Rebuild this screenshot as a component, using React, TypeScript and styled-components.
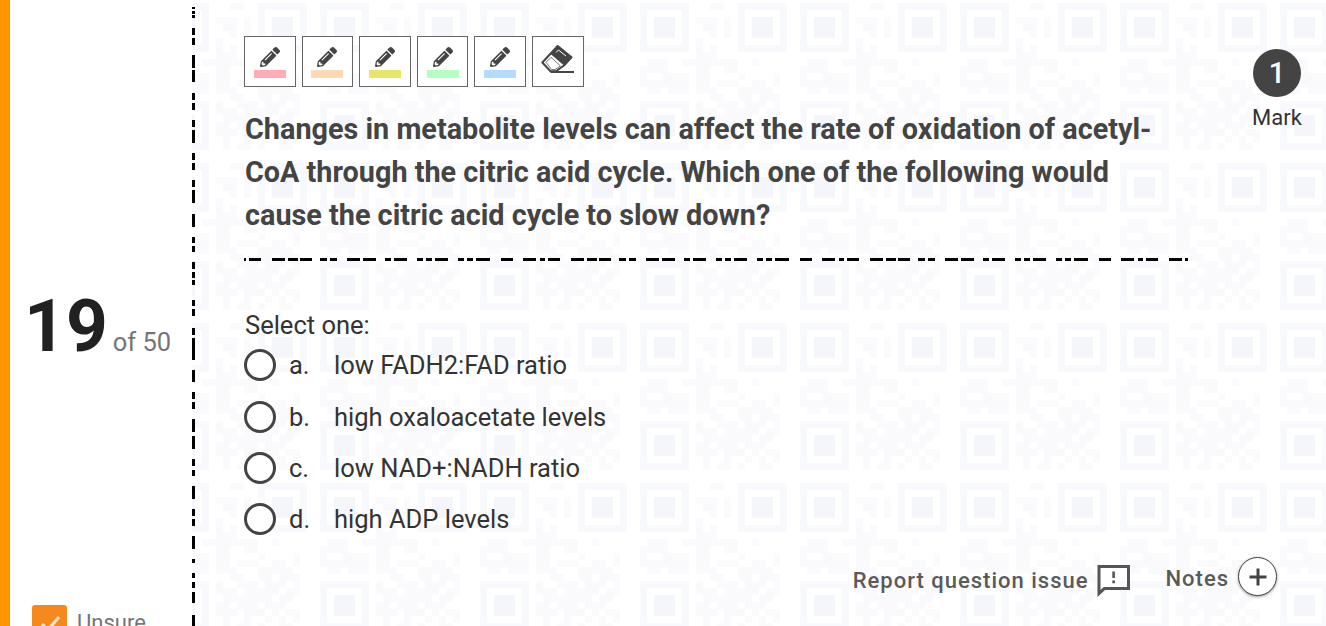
import React from "react";
import styled, { createGlobalStyle } from "styled-components";
import { FaPencilAlt } from "react-icons/fa";

const GlobalStyle = createGlobalStyle`
  html, body { margin: 0; padding: 0; background: #fff; }
  * { box-sizing: border-box; }
`;

const QR_ROWS = [
  "000000000011000000000",
  "000000000000000000000",
  "000000001110100000000",
  "000000000110100000000",
  "000000000010100000000",
  "000000001000000000000",
  "000000001010000000000",
  "000000001110000000000",
  "011100111111110010000",
  "111100001100110000000",
  "100111101100001000010",
  "111111101101110011010",
  "011011101110001111100",
  "000000000011001101110",
  "000000001001110111010",
  "000000001110111110110",
  "000000000111111101100",
  "000000001101110111000",
  "000000001110111010110",
  "000000000100100101010",
  "000000000101101001100",
];

const ring = (x: number, y: number) =>
  `M${x * 7} ${y * 7}h49v49h-49zM${x * 7 + 7} ${y * 7 + 7}v35h35v-35z`;
const core = (x: number, y: number) => `M${x * 7 + 14} ${y * 7 + 14}h21v21h-21z`;

const FINDERS: [number, number][] = [
  [0, 0],
  [14, 0],
  [0, 14],
];

const dataPath = QR_ROWS.map((row, r) =>
  [...row].map((c, col) => (c === "1" ? `M${col * 7} ${r * 7}h7v7h-7z` : "")).join("")
).join("");

const svgUri = (w: number, h: number, body: string) =>
  `url("data:image/svg+xml,${encodeURIComponent(
    `<svg xmlns='http://www.w3.org/2000/svg' width='${w}' height='${h}'>${body}</svg>`
  )}")`;

const qrTile = svgUri(
  160,
  160,
  `<path fill='#fafafd' d='${dataPath}'/>` +
    `<path fill='#f8f9fd' fill-rule='evenodd' d='${FINDERS.map(([x, y]) => ring(x, y)).join("")}'/>` +
    `<path fill='#f5f6fb' d='${FINDERS.map(([x, y]) => core(x, y)).join("")}'/>`
);

const H_SEGMENTS = [
  [245, 247], [250, 262], [273, 286], [289, 299], [301, 313], [321, 328], [331, 338], [348, 361], [364, 377],
  [386, 392], [395, 408], [418, 424], [427, 433], [436, 449], [459, 465], [468, 474], [477, 491], [502, 514],
  [524, 537], [541, 547], [550, 563],
];
const ruleTile = svgUri(
  299,
  3,
  H_SEGMENTS.map(([a, b]) => `<rect x='${a - 245}' width='${b - a}' height='3'/>`).join("")
);

const V_SEGMENTS = [
  [7, 9], [11, 14], [15, 18], [28, 35], [38, 45], [55, 68], [70, 82], [93, 100], [103, 110], [120, 127], [130, 143],
  [153, 160], [163, 170], [180, 187], [190, 203], [214, 227], [237, 243], [246, 252], [262, 269], [272, 278],
  [280, 285], [300, 306], [309, 316], [328, 335], [338, 360], [370, 382], [392, 399], [402, 409], [419, 432],
  [436, 449], [459, 466], [470, 476], [486, 499], [509, 516], [519, 526], [536, 549], [559, 563], [573, 578],
  [582, 588], [592, 603], [615, 626],
];
const dividerLine = svgUri(
  3,
  626,
  V_SEGMENTS.map(([a, b]) => `<rect y='${a}' width='3' height='${b - a}'/>`).join("")
);

const Page = styled.div`
  display: flex;
  width: 1326px;
  height: 626px;
  overflow: hidden;
  font-family: Roboto, "Liberation Sans", sans-serif;
  background-color: #fff;
  background-image: ${qrTile};
  background-position: 0 3px;
`;

const Sidebar = styled.aside`
  flex: 0 0 192px;
  height: 626px;
  display: flex;
  flex-direction: column;
  padding: 283px 0 0 14px;
  background: #fff;
  border-left: 10px solid #ff9600;
`;

const Divider = styled.div`
  flex: 0 0 3px;
  height: 626px;
  background-image: ${dividerLine};
`;

const Counter = styled.div`
  display: flex;
  align-items: baseline;
  gap: 5px;
`;

const CounterBig = styled.span`
  font-size: 73px;
  line-height: 86px;
  font-weight: 700;
  color: #212121;
`;

const CounterSmall = styled.span`
  font-size: 25.5px;
  color: #757575;
`;

const Unsure = styled.div`
  display: flex;
  align-items: flex-start;
  gap: 10px;
  margin: 236px 0 0 8px;
`;

const CheckBox = styled.span`
  flex: 0 0 35px;
  height: 35px;
  border-radius: 3px;
  background: #f5891d;
  display: flex;
  align-items: center;
  justify-content: center;
`;

const UnsureLabel = styled.span`
  font-size: 22px;
  line-height: 26px;
  margin-top: 5px;
  color: #757575;
`;

const Main = styled.main`
  flex: 1;
  min-width: 0;
  padding-left: 49px;
`;

const TopGrid = styled.div`
  display: grid;
  grid-template-columns: 944px 1fr;
`;

const Question = styled.section`
  padding-top: 36px;
`;

const Toolbar = styled.div`
  display: flex;
  gap: 6px;
`;

const ToolButton = styled.button`
  width: 51.6px;
  height: 51px;
  padding: 0;
  border: 1px solid #666;
  background: #fff;
  display: flex;
  flex-direction: column;
  align-items: center;
  color: #444;
`;

const PencilSlot = styled.span`
  height: 22px;
  margin-top: 10px;
  display: flex;
  align-items: flex-start;
`;

const EraserSlot = styled.span`
  margin-top: 8px;
  display: flex;
`;

const Swatch = styled.span<{ $color: string }>`
  width: 32px;
  height: 8px;
  margin-top: 1px;
  background: ${(p) => p.$color};
`;

const QuestionText = styled.h2`
  margin: 21px 0 0;
  padding-left: 1px;
  font-size: 28.8px;
  line-height: 43px;
  font-weight: 700;
  color: #444;
`;

const Rule = styled.div`
  height: 3px;
  margin-top: 21px;
  background-image: ${ruleTile};
  background-repeat: repeat-x;
`;

const MarkBox = styled.aside`
  display: flex;
  flex-direction: column;
  align-items: center;
  width: 50px;
  margin: 49px 0 0 64px;
`;

const MarkCircle = styled.div`
  width: 48px;
  height: 48px;
  border-radius: 50%;
  background: #444;
  color: #fff;
  font-size: 29px;
  font-weight: 500;
  display: flex;
  align-items: center;
  justify-content: center;
`;

const MarkLabel = styled.div`
  margin-top: 8px;
  font-size: 22px;
  line-height: 26px;
  color: #333;
`;

const Prompt = styled.div`
  margin: 48.6px 0 0 1px;
  font-size: 25.5px;
  line-height: 30px;
  color: #333;
`;

const OptionList = styled.div`
  display: flex;
  flex-direction: column;
`;

const Option = styled.label`
  display: flex;
  align-items: center;
  height: 51.3px;
  font-size: 25.5px;
  color: #333;
`;

const Radio = styled.span`
  flex: 0 0 32px;
  height: 32px;
  border-radius: 50%;
  border: 3px solid #444;
  background: #fff;
`;

const OptionKey = styled.span`
  width: 45px;
  margin-left: 13px;
`;

const Footer = styled.div`
  display: flex;
  align-items: center;
  justify-content: flex-end;
  margin-top: 12px;
  padding-right: 49px;
`;

const FooterLink = styled.span`
  font-size: 22px;
  font-weight: 500;
  letter-spacing: 1px;
  color: #5a5a5a;
`;

const NotesLabel = styled(FooterLink)`
  padding-top: 4px;
`;

const ReportGroup = styled.div`
  display: flex;
  align-items: center;
  gap: 9px;
  margin-right: 35px;
  padding-top: 7px;
`;

const NotesGroup = styled.div`
  display: flex;
  align-items: center;
  gap: 9px;
`;

const PlusButton = styled.button`
  width: 39px;
  height: 39px;
  padding: 0;
  border-radius: 50%;
  border: 1px solid #444;
  background: #fff;
  box-shadow: 0 1px 3px rgba(0, 0, 0, 0.4);
  display: flex;
  align-items: center;
  justify-content: center;
`;

const swatches = ["#ffadb5", "#ffd9b3", "#e6e667", "#b5ffc4", "#b3daff"];
const options = [
  ["a.", "low FADH2:FAD ratio"],
  ["b.", "high oxaloacetate levels"],
  ["c.", "low NAD+:NADH ratio"],
  ["d.", "high ADP levels"],
];

const EraserIcon = () => (
  <svg width="34" height="29" viewBox="0 0 34 29">
    <path d="M9 8.5 16.7 1 30.5 12.3 23 20.5z" fill="#444" />
    <path d="M15 7.5 17.5 5 25 11" stroke="#fff" strokeWidth="1" fill="none" />
    <path
      d="M16.7 1 30.5 12.3 23 20.5 15 26.2H9.5L1.3 17.5z"
      fill="none"
      stroke="#444"
      strokeWidth="2"
      strokeLinejoin="round"
    />
    <path d="M5 17.3 10 12.3 19.5 21 14 24.5H10.5z" fill="none" stroke="#777" strokeWidth="1" />
    <path d="M9.5 27H33" stroke="#444" strokeWidth="2" />
  </svg>
);

const ReportIcon = () => (
  <svg width="33" height="33" viewBox="0 0 33 33">
    <path fillRule="evenodd" fill="#555" d="M0.5 1H33V26H8L0.5 33zM3.5 4V26L6.8 23H30V4z" />
    <path d="M15.3 7.5h2.6v6.5h-2.6zM15.3 16.5h2.6v2.8h-2.6z" fill="#555" />
  </svg>
);

const PlusIcon = () => (
  <svg width="18" height="18" viewBox="0 0 18 18">
    <path d="M9 0.5V17.5M0.5 9H17.5" stroke="#444" strokeWidth="3" />
  </svg>
);

const CheckIcon = () => (
  <svg width="24" height="24" viewBox="0 0 24 24">
    <path d="M4 13 10 19 21 6" fill="none" stroke="#ffe9c9" strokeWidth="3" />
  </svg>
);

export default function App() {
  return (
    <>
      <GlobalStyle />
      <Page>
        <Sidebar>
          <Counter>
            <CounterBig>19</CounterBig>
            <CounterSmall>of 50</CounterSmall>
          </Counter>
          <Unsure>
            <CheckBox>
              <CheckIcon />
            </CheckBox>
            <UnsureLabel>Unsure</UnsureLabel>
          </Unsure>
        </Sidebar>
        <Divider />
        <Main>
          <TopGrid>
            <Question>
              <Toolbar>
                {swatches.map((c) => (
                  <ToolButton key={c}>
                    <PencilSlot>
                      <FaPencilAlt size={20} />
                    </PencilSlot>
                    <Swatch $color={c} />
                  </ToolButton>
                ))}
                <ToolButton>
                  <EraserSlot>
                    <EraserIcon />
                  </EraserSlot>
                </ToolButton>
              </Toolbar>
              <QuestionText>
                Changes in metabolite levels can affect the rate of oxidation of acetyl-CoA through the citric acid
                cycle. Which one of the following would cause the citric acid cycle to slow down?
              </QuestionText>
              <Rule />
            </Question>
            <MarkBox>
              <MarkCircle>1</MarkCircle>
              <MarkLabel>Mark</MarkLabel>
            </MarkBox>
          </TopGrid>
          <Prompt>Select one:</Prompt>
          <OptionList>
            {options.map(([k, t]) => (
              <Option key={k}>
                <Radio />
                <OptionKey>{k}</OptionKey>
                {t}
              </Option>
            ))}
          </OptionList>
          <Footer>
            <ReportGroup>
              <FooterLink>Report question issue</FooterLink>
              <ReportIcon />
            </ReportGroup>
            <NotesGroup>
              <NotesLabel>Notes</NotesLabel>
              <PlusButton>
                <PlusIcon />
              </PlusButton>
            </NotesGroup>
          </Footer>
        </Main>
      </Page>
    </>
  );
}
